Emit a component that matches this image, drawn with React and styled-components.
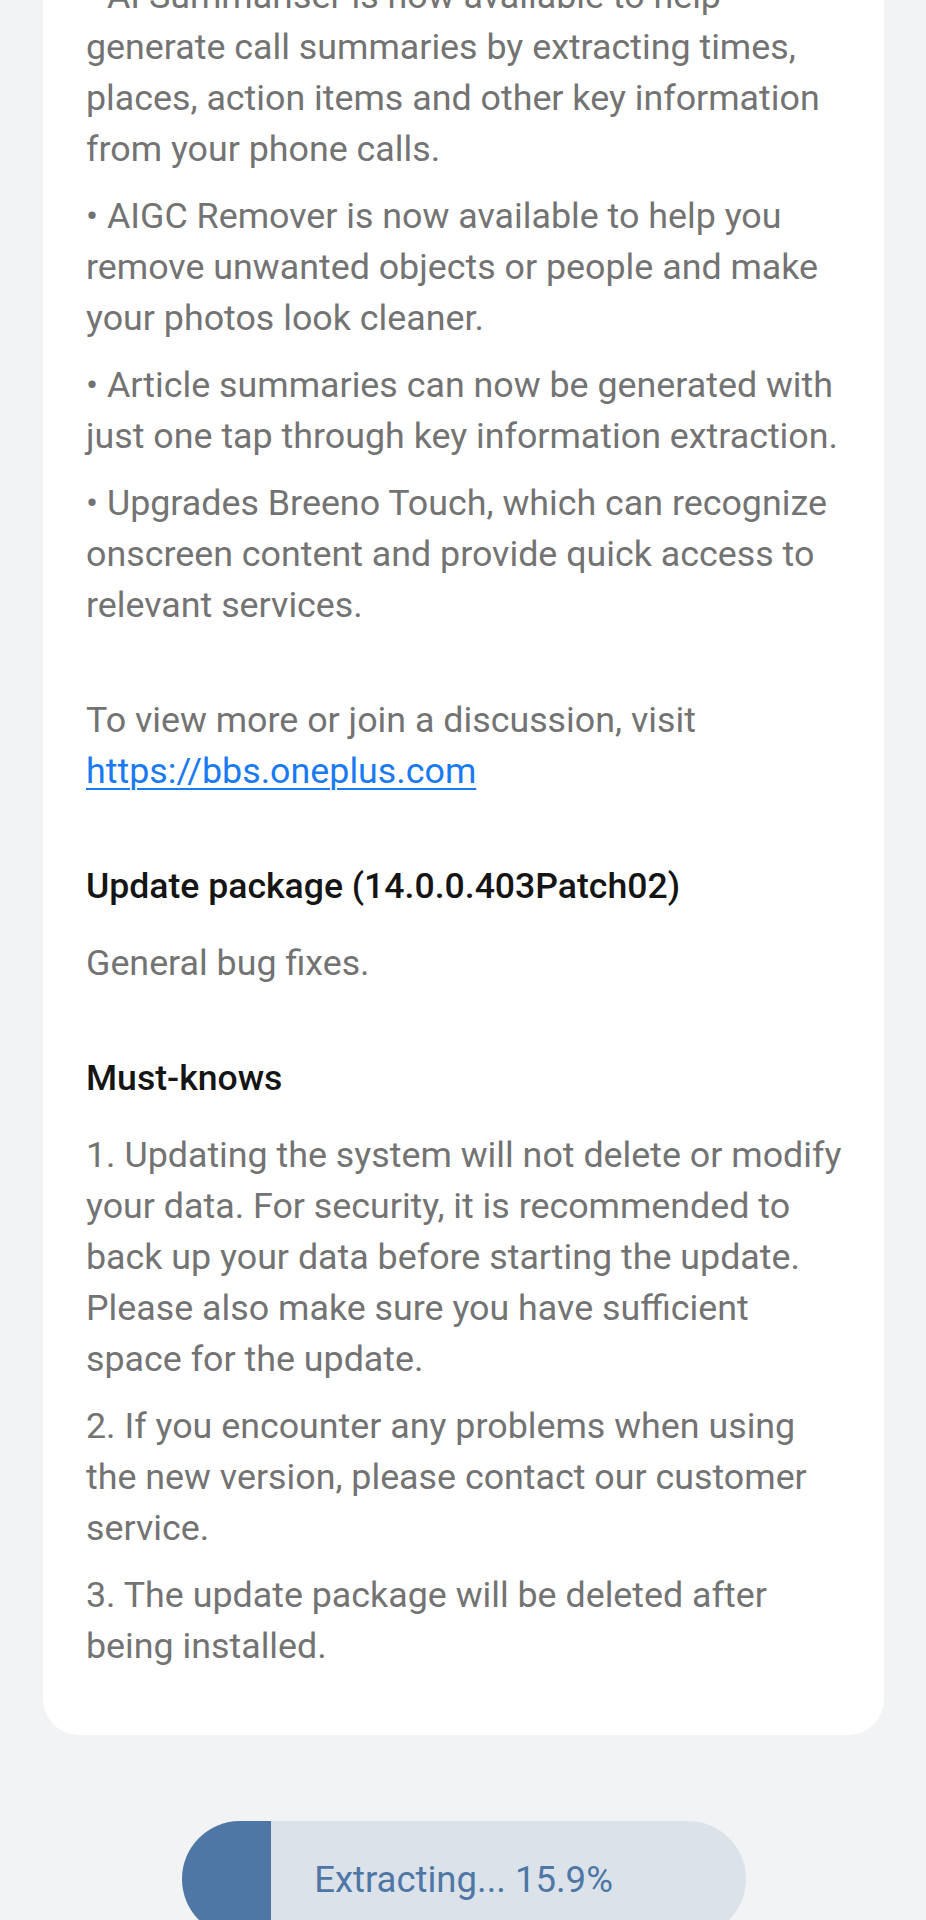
import React from 'react';
import styled, { createGlobalStyle } from 'styled-components';

const GlobalStyle = createGlobalStyle`
    html, body {
        margin: 0;
        padding: 0;
        background: #f2f3f5;
    }
    body {
        font-family: Roboto, "Noto Sans", "Liberation Sans", sans-serif;
        -webkit-font-smoothing: antialiased;
    }
`;

const features = [
    '• AI Summariser is now available to help generate call summaries by extracting times, places, action items and other key information from your phone calls.',
    '• AIGC Remover is now available to help you remove unwanted objects or people and make your photos look cleaner.',
    '• Article summaries can now be generated with just one tap through key information extraction.',
    '• Upgrades Breeno Touch, which can recognize onscreen content and provide quick access to relevant services.',
];

const mustKnows = [
    '1. Updating the system will not delete or modify your data. For security, it is recommended to back up your data before starting the update. Please also make sure you have sufficient space for the update.',
    '2. If you encounter any problems when using the new version, please contact our customer service.',
    '3. The update package will be deleted after being installed.',
];

const App = () => {
    const progress = 15.9;

    return (
        <>
            <GlobalStyle />
            <Page>
                {/* page is scrolled part way into the release notes */}
                <Notes>
                    <Section>
                        {features.map(text => (
                            <Para key={text}>{text}</Para>
                        ))}
                    </Section>

                    <Section>
                        <Para>
                            To view more or join a discussion, visit{' '}
                            <Link href="#">https://bbs.oneplus.com</Link>
                        </Para>
                    </Section>

                    <Section>
                        <Heading>Update package (14.0.0.403Patch02)</Heading>
                        <Para>General bug fixes.</Para>
                    </Section>

                    <Section>
                        <Heading>Must-knows</Heading>
                        {mustKnows.map(text => (
                            <Para key={text} $gap={16}>
                                {text}
                            </Para>
                        ))}
                    </Section>
                </Notes>

                <Footer>
                    <ProgressButton>
                        <Fill style={{ width: `${progress}%` }} />
                        <Label>Extracting... {progress}%</Label>
                    </ProgressButton>
                </Footer>
            </Page>
        </>
    );
};

const Page = styled.div`
    min-height: 1920px;
    padding: 0 42px 0 43px;
    overflow: hidden;
    background: #f2f3f5;
`;

const Notes = styled.div`
    margin-top: -72px;
    padding: 43px 37px 63px 43px;
    background: #ffffff;
    border-radius: 36px;
    display: flex;
    flex-direction: column;
    gap: 64px;
`;

const Section = styled.div`
    display: flex;
    flex-direction: column;
`;

const Para = styled.p`
    margin: 0;
    font-size: 35.8px;
    line-height: 51px;
    color: #737373;
    & + & {
        margin-top: ${p => p.$gap || 15}px;
    }
`;

const Heading = styled.h3`
    margin: 0 0 26px;
    font-size: 35.6px;
    line-height: 51px;
    font-weight: 500;
    color: #151515;
`;

const Link = styled.a`
    color: #1a7af2;
    text-decoration: underline;
    text-underline-offset: 5px;
    text-decoration-thickness: 2px;
`;

const Footer = styled.div`
    display: flex;
    justify-content: center;
    padding-top: 86px;
`;

const ProgressButton = styled.div`
    position: relative;
    width: 564px;
    height: 116px;
    border-radius: 58px;
    background: #dce2ea;
    overflow: hidden;
    display: flex;
    align-items: center;
    justify-content: center;
`;

const Fill = styled.div`
    position: absolute;
    left: 0;
    top: 0;
    bottom: 0;
    background: #4e77a5;
`;

const Label = styled.span`
    position: relative;
    font-size: 36.5px;
    color: #4e77a5;
`;

export default App;
